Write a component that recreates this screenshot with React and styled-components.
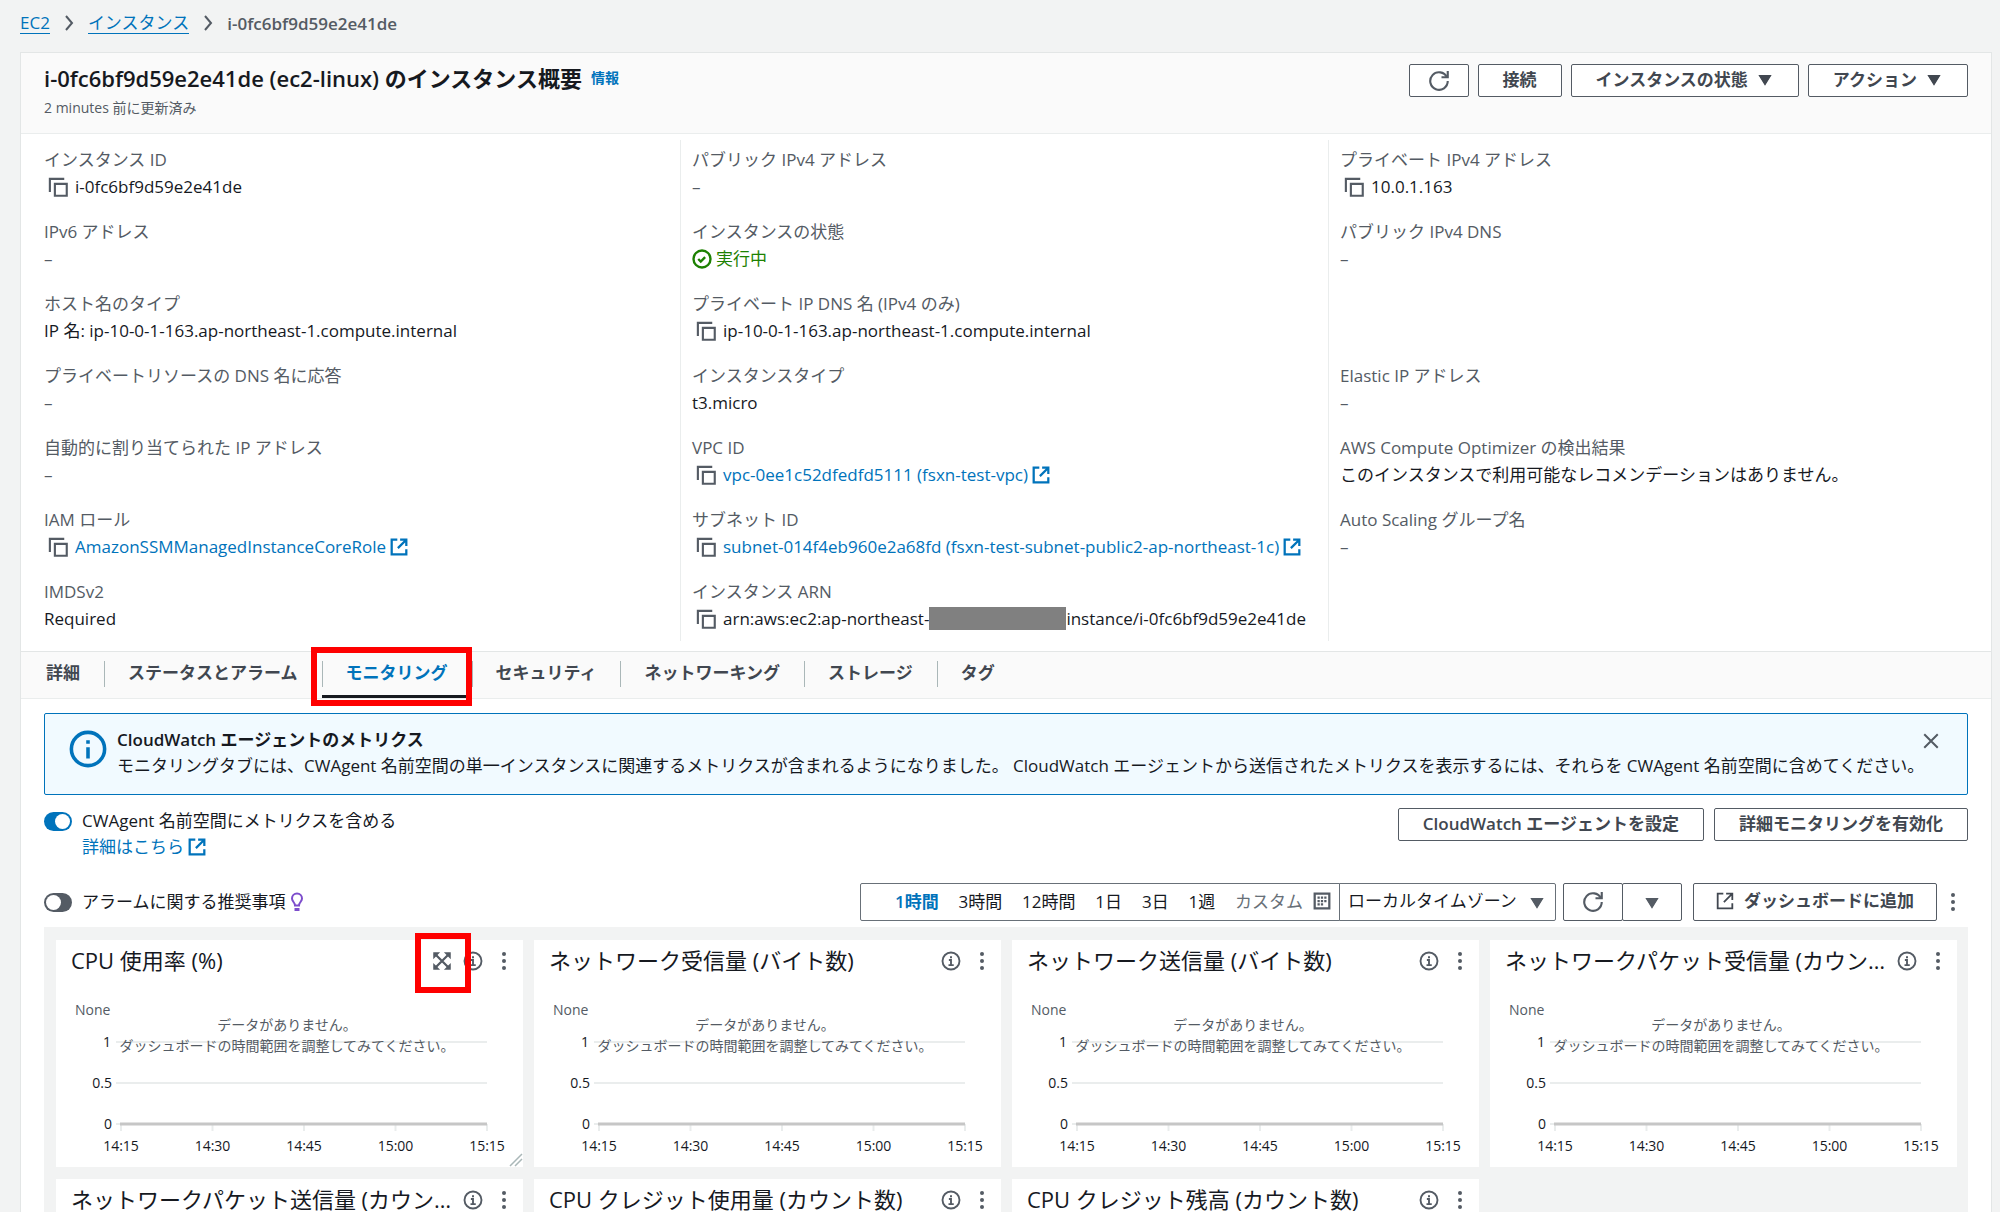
import React from 'react'
import styled, { createGlobalStyle } from 'styled-components'

const GlobalStyle = createGlobalStyle`
    * {
        box-sizing: border-box;
    }

    body {
        margin: 0;
        background: #f2f3f3;
        color: #16191f;
        font-family: 'Open Sans', 'Noto Sans CJK JP', sans-serif;
        font-size: 17px;
        line-height: 27px;
    }

    button, select, input {
        font: inherit;
        color: inherit;
    }

    a {
        color: #0073bb;
        text-decoration: none;
    }
`

const Page = styled.div`
    height: 100vh;
    overflow-y: auto;
    scrollbar-width: none;
`

const Svg = styled.svg`
    display: block;
    flex: none;
    width: ${props => props.$width || props.$size || 18}px;
    height: ${props => props.$size || 18}px;
    fill: none;
    stroke: currentColor;
    stroke-width: ${props => props.$stroke || 2};
`

const Breadcrumbs = styled.nav`
    display: flex;
    align-items: center;
    gap: 11px;
    height: 52px;
    padding: 0 20px 6px;
    color: #545b64;

    a {
        line-height: 21px;
        border-bottom: 1px solid #0073bb;
    }

    span {
        font-weight: 600;
    }
`

const Panel = styled.main`
    margin: 0 8px 0 20px;
    background: #fff;
    border: 1px solid #e3e6e6;
    border-bottom: 0;
`

const Header = styled.header`
    display: flex;
    justify-content: space-between;
    align-items: flex-start;
    height: 81px;
    padding: 11px 23px 0;
    background: #fafafa;
    border-bottom: 1px solid #eaeded;
`

const Title = styled.h1`
    display: flex;
    align-items: center;
    gap: 9px;
    margin: 0;
    font-size: 22px;
    line-height: 28px;
    font-weight: 600;

    a {
        font-size: 14px;
    }
`

const Updated = styled.p`
    margin: 2px 0 0;
    color: #545b64;
    font-size: 14px;
`

const ButtonRow = styled.div`
    display: flex;
    gap: ${props => props.$gap || 9}px;
`

const Button = styled.button`
    display: flex;
    align-items: center;
    justify-content: center;
    gap: ${props => props.$gap || 8}px;
    height: ${props => props.$tall ? 38 : 33}px;
    padding: 0 ${props => props.$pad || 24}px 3px;
    background: #fff;
    border: 1px solid #545b64;
    border-radius: 2px;
    color: #414750;
    font-weight: 600;
    white-space: nowrap;
`

const IconButton = styled(Button)`
    width: 60px;
    padding: 0;
    color: #545b64;
`

const BareButton = styled.button`
    display: flex;
    align-items: center;
    justify-content: center;
    padding: 0;
    border: 0;
    background: none;
    color: #545b64;
`

const Summary = styled.div`
    display: grid;
    grid-template-columns: repeat(3, minmax(0, 1fr));
    padding: 6px 14px 10px 12px;
`

const SummaryColumn = styled.dl`
    display: grid;
    grid-template-rows: repeat(7, 54px);
    gap: 18px;
    margin: 0;
    padding: 6px 10px 9px 11px;
    border-right: 1px solid #eaeded;

    &:last-child {
        border-right: 0;
    }
`

const Label = styled.dt`
    color: #545b64;
`

const Value = styled.dd`
    display: flex;
    align-items: center;
    margin: 0;
    white-space: nowrap;
    color: ${props => props.$muted ? '#545b64' : 'inherit'};
`

const CopyButton = styled(BareButton)`
    margin: 0 7px 0 4px;
`

const ExternalLink = styled.a`
    display: inline-flex;
    align-items: center;
    gap: 4px;
`

const Status = styled.span`
    display: flex;
    align-items: center;
    gap: 4px;
    color: #1d8102;
`

const Redacted = styled.span`
    width: 137px;
    height: 23px;
    background: #808080;
`

const TabBar = styled.nav`
    display: flex;
    height: 48px;
    padding-left: 1px;
    background: #fafafa;
    border-top: 1px solid #e3e6e6;
    border-bottom: 1px solid #eaeded;
`

const Tab = styled.button`
    position: relative;
    display: flex;
    align-items: center;
    padding: 0 24px 3px;
    border: 0;
    border-bottom: 3px solid ${props => props.$active ? '#16191f' : 'transparent'};
    background: linear-gradient(#aab7b8, #aab7b8) 0 9px / 1px 26px no-repeat;
    color: ${props => props.$active ? '#0073bb' : '#414750'};
    font-weight: 600;

    &:first-child {
        background: none;
    }
`

const Highlight = styled.span`
    position: absolute;
    z-index: 2;
    inset: ${props => props.$inset};
    border: 6px solid #fe0000;
    pointer-events: none;
`

const Content = styled.section`
    padding: 14px 23px 0;
`

const Alert = styled.div`
    display: flex;
    align-items: flex-start;
    height: 82px;
    padding: 13px 27px 0 24px;
    background: #f1faff;
    border: 1px solid #0073bb;
    border-radius: 2px;

    & > svg {
        margin-top: 3px;
        color: #0073bb;
    }
`

const AlertText = styled.div`
    flex: 1;
    min-width: 0;
    padding-left: 10px;
    line-height: 26px;
    white-space: nowrap;

    strong, span {
        display: block;
    }

    strong {
        font-weight: 600;
    }
`

const CloseButton = styled(BareButton)`
    margin-top: 5px;
`

const Row = styled.div`
    display: flex;
    justify-content: space-between;
    align-items: flex-start;
    margin-top: ${props => props.$top}px;
`

const ToggleBox = styled.div`
    display: grid;
    grid-template-columns: 28px auto;
    align-items: center;
    column-gap: 10px;
    padding-top: ${props => props.$top || 0}px;
    line-height: 26px;

    label {
        display: flex;
        align-items: center;
        gap: 4px;
    }
`

const ToggleInput = styled.input`
    appearance: none;
    display: flex;
    width: 28px;
    height: 19px;
    margin: 0;
    padding: 2px;
    border-radius: 10px;
    background: #545b64;

    &::before {
        content: '';
        width: 15px;
        height: 15px;
        border-radius: 50%;
        background: #fff;
    }

    &:checked {
        justify-content: flex-end;
        background: #0073bb;
    }
`

const ToggleLink = styled(ExternalLink)`
    grid-column: 2;
`

const Toolbar = styled.div`
    display: flex;
    align-items: center;
`

const RangeBox = styled.div`
    display: flex;
    align-items: center;
    justify-content: space-between;
    width: 480px;
    height: 38px;
    padding: 0 8px 2px 34px;
    border: 1px solid #687078;
    border-radius: 2px 0 0 2px;
`

const RangeButton = styled(BareButton)`
    gap: 10px;
    color: ${props => props.$active ? '#0073bb' : props.$muted ? '#687078' : '#16191f'};
    font-weight: ${props => props.$active ? 600 : 400};
    white-space: nowrap;

    svg {
        color: #545b64;
    }
`

const ZoneBox = styled.label`
    display: grid;
    align-items: center;
    width: 217px;
    height: 38px;
    margin: 0 7px 0 -1px;
    color: #545b64;

    & > * {
        grid-area: 1 / 1;
    }

    svg {
        justify-self: end;
        margin-right: 10px;
        pointer-events: none;
    }
`

const ZoneSelect = styled.select`
    appearance: none;
    width: 100%;
    height: 38px;
    padding: 0 30px 3px 8px;
    border: 1px solid #687078;
    border-radius: 0 2px 2px 0;
    background: #fff;
    color: #16191f;
`

const SplitButtons = styled.div`
    display: flex;
    margin-right: 11px;

    button + button {
        margin-left: -1px;
    }
`

const MoreButton = styled(BareButton)`
    width: 31px;
    height: 38px;
`

const Board = styled.div`
    display: grid;
    grid-template-columns: repeat(4, minmax(0, 1fr));
    gap: 12px 11px;
    margin-top: 6px;
    padding: 13px 11px 13px 12px;
    background: #f2f3f3;
`

const Card = styled.article`
    height: 227px;
    background: #fff;
`

const CardHeader = styled.div`
    display: flex;
    align-items: center;
    height: 42px;
    padding: 0 16px 0 15px;

    h2 {
        flex: 1;
        min-width: 0;
        margin: 0 8px 3px 0;
        overflow: hidden;
        font-size: 22px;
        line-height: 32px;
        font-weight: 400;
        white-space: nowrap;
        text-overflow: ellipsis;
    }
`

const CardTools = styled.div`
    display: flex;
    align-items: center;
    gap: 18px;
    color: #545b64;
`

const ExpandButton = styled(BareButton)`
    position: relative;
    margin-right: -7px;
`

const ChartSvg = styled.svg`
    display: block;
    width: 100%;
    font-size: 14px;
    fill: #16191f;
`

const Icon = ({ size, stroke, children }) => (
    <Svg viewBox="0 0 16 16" $size={size} $stroke={stroke} aria-hidden="true">{children}</Svg>
)

const CopyIcon = () => (
    <Icon size={20} stroke={1.7}>
        <path d="M15 5.500H5.500V15H15z" />
        <path d="M13 1.500H1.500V12" />
    </Icon>
)

const ExternalIcon = ({ stroke = 2 }) => (
    <Icon size={18} stroke={stroke}>
        <path d="M6.500 1.500h-5v13h13V10" />
        <path d="M9 1.500h5.500V7M14.500 1.500L7 9" />
    </Icon>
)

const RefreshIcon = () => (
    <Icon size={20} stroke={1.7}>
        <path d="M10 5h5V0" />
        <path d="M15 8a7 7 0 1 1-.7-3" />
    </Icon>
)

const Chevron = () => (
    <Icon size={16} stroke={2}>
        <path d="M5 1l6 7-6 7" />
    </Icon>
)

const Caret = () => (
    <Icon size={18}>
        <path d="M3 5h10L8 13z" fill="currentColor" strokeWidth="1" />
    </Icon>
)

const CheckIcon = () => (
    <Icon size={20} stroke={1.9}>
        <circle cx="8" cy="8" r="6.800" />
        <path d="M5 8l2 2 3.500-3.500" />
    </Icon>
)

const InfoIcon = () => (
    <Icon size={20} stroke={1.5}>
        <circle cx="8" cy="8" r="6.800" />
        <path d="M6.300 7.200H8v4M6 11.300h4.200M7.200 5h1.600" />
    </Icon>
)

const BigInfoIcon = () => (
    <Icon size={38} stroke={1.5}>
        <circle cx="8" cy="8" r="7" />
        <path d="M8 12V7.300M8 5.800V4.300" />
    </Icon>
)

const Dots = () => (
    <Svg viewBox="0 0 6 20" $width={6} $size={20} aria-hidden="true">
        {[3, 10, 17].map(y => <circle key={y} cx="3" cy={y} r="2" fill="currentColor" stroke="none" />)}
    </Svg>
)

const CalendarIcon = () => (
    <Icon size={18} stroke={2}>
        <path d="M1.500 1.500h13v13h-13z" />
        <path d="M4 5h2M7 5h2M10 5h2M4 8h2M7 8h2M10 8h2M4 11h2M7 11h2" />
    </Icon>
)

const BulbIcon = () => (
    <Svg viewBox="0 0 14 20" $width={14} $size={20} aria-hidden="true" color="#7d4dcc">
        <path d="M5 13.500C5 10.500 2 9.500 2 6.500a5 5 0 0 1 10 0c0 3-3 4-3 7z" />
        <path d="M4.500 17.500h5" strokeWidth="3" />
    </Svg>
)

const ExpandIcon = () => (
    <Icon size={20} stroke={1.8}>
        <path d="M1 1h5.500L1 6.500zM15 1H9.500L15 6.500zM1 15h5.500L1 9.500zM15 15H9.500L15 9.500z" fill="currentColor" stroke="none" />
        <path d="M2 2l12 12M14 2L2 14" />
    </Icon>
)

const copied = (text) => ({ copy: true, text })

const columns = [
    [
        ['インスタンス ID', copied('i-0fc6bf9d59e2e41de')],
        ['IPv6 アドレス'],
        ['ホスト名のタイプ', { text: 'IP 名: ip-10-0-1-163.ap-northeast-1.compute.internal' }],
        ['プライベートリソースの DNS 名に応答'],
        ['自動的に割り当てられた IP アドレス'],
        ['IAM ロール', { copy: true, link: 'AmazonSSMManagedInstanceCoreRole' }],
        ['IMDSv2', { text: 'Required' }],
    ],
    [
        ['パブリック IPv4 アドレス'],
        ['インスタンスの状態', { status: '実行中' }],
        ['プライベート IP DNS 名 (IPv4 のみ)', copied('ip-10-0-1-163.ap-northeast-1.compute.internal')],
        ['インスタンスタイプ', { text: 't3.micro' }],
        ['VPC ID', { copy: true, link: 'vpc-0ee1c52dfedfd5111 (fsxn-test-vpc)' }],
        ['サブネット ID', { copy: true, link: 'subnet-014f4eb960e2a68fd (fsxn-test-subnet-public2-ap-northeast-1c)' }],
        ['インスタンス ARN', { copy: true, text: 'arn:aws:ec2:ap-northeast-', rest: 'instance/i-0fc6bf9d59e2e41de' }],
    ],
    [
        ['プライベート IPv4 アドレス', copied('10.0.1.163')],
        ['パブリック IPv4 DNS'],
        null,
        ['Elastic IP アドレス'],
        ['AWS Compute Optimizer の検出結果', { text: 'このインスタンスで利用可能なレコメンデーションはありません。' }],
        ['Auto Scaling グループ名'],
    ],
]

const tabs = ['詳細', 'ステータスとアラーム', 'モニタリング', 'セキュリティ', 'ネットワーキング', 'ストレージ', 'タグ']

const ranges = ['1時間', '3時間', '12時間', '1日', '3日', '1週']

const metrics = [
    'CPU 使用率 (%)',
    'ネットワーク受信量 (バイト数)',
    'ネットワーク送信量 (バイト数)',
    'ネットワークパケット受信量 (カウント数)',
    'ネットワークパケット送信量 (カウント数)',
    'CPU クレジット使用量 (カウント数)',
    'CPU クレジット残高 (カウント数)',
]

const times = ['14:15', '14:30', '14:45', '15:00', '15:15']

function Field({ item }) {
    if (!item) return <div />
    const [label, value] = item

    return (
        <div>
            <Label>{label}</Label>
            {
                value ? (
                    <Value>
                        {value.copy && <CopyButton aria-label="コピー"><CopyIcon /></CopyButton>}
                        {value.text}
                        {value.rest && <><Redacted />{value.rest}</>}
                        {value.link && <ExternalLink href="#">{value.link}<ExternalIcon /></ExternalLink>}
                        {value.status && <Status><CheckIcon />{value.status}</Status>}
                    </Value>
                ) : <Value $muted>–</Value>
            }
        </div>
    )
}

function Chart({ resizable }) {
    return (
        <ChartSvg viewBox="0 0 467 185">
            <g stroke="#eaeded" strokeWidth="2">
                <path d="M60 60H431M60 101H431M60 142H65" />
                {times.map((time, i) => <path key={time} d={`M${65 + i * 91.5} 142v7`} />)}
            </g>
            <path d="M64 142H431" stroke="#c6c6c6" strokeWidth="3" />
            <text x="19" y="33" fill="#545b64">None</text>
            <g textAnchor="end">
                <text x="55" y="65">1</text>
                <text x="56" y="106">0.5</text>
                <text x="56" y="147">0</text>
            </g>
            <g textAnchor="middle">
                {times.map((time, i) => <text key={time} x={65 + i * 91.5} y="169">{time}</text>)}
                <g fill="#545b64">
                    <text x="231" y="48">データがありません。</text>
                    <text x="231" y="69">ダッシュボードの時間範囲を調整してみてください。</text>
                </g>
            </g>
            {resizable && <path d="M454 184l12-12M459 184l7-7" stroke="#aab7b8" strokeWidth="1.500" />}
        </ChartSvg>
    )
}

function MetricCard({ title, expanded }) {
    return (
        <Card>
            <CardHeader>
                <h2>{title}</h2>
                <CardTools>
                    {
                        expanded && (
                            <ExpandButton aria-label="拡大">
                                <ExpandIcon />
                                <Highlight $inset="-18px -19px -22px -17px" />
                            </ExpandButton>
                        )
                    }
                    <BareButton aria-label="情報"><InfoIcon /></BareButton>
                    <BareButton aria-label="メニュー"><Dots /></BareButton>
                </CardTools>
            </CardHeader>
            <Chart resizable={expanded} />
        </Card>
    )
}

export default function App() {
    const [range, setRange] = React.useState('1時間')

    return (
        <Page>
            <GlobalStyle />
            <Breadcrumbs>
                <a href="#">EC2</a>
                <Chevron />
                <a href="#">インスタンス</a>
                <Chevron />
                <span>i-0fc6bf9d59e2e41de</span>
            </Breadcrumbs>
            <Panel>
                <Header>
                    <div>
                        <Title>
                            i-0fc6bf9d59e2e41de (ec2-linux) のインスタンス概要
                            <a href="#">情報</a>
                        </Title>
                        <Updated>2 minutes 前に更新済み</Updated>
                    </div>
                    <ButtonRow>
                        <IconButton aria-label="更新"><RefreshIcon /></IconButton>
                        <Button>接続</Button>
                        <Button>インスタンスの状態<Caret /></Button>
                        <Button>アクション<Caret /></Button>
                    </ButtonRow>
                </Header>
                <Summary>
                    {columns.map((column, i) => (
                        <SummaryColumn key={i}>
                            {column.map((item, j) => <Field key={j} item={item} />)}
                        </SummaryColumn>
                    ))}
                </Summary>
                <TabBar>
                    {tabs.map(tab => (
                        <Tab key={tab} $active={tab === 'モニタリング'}>
                            {tab}
                            {tab === 'モニタリング' && <Highlight $inset="-5px 0 -11px -11px" />}
                        </Tab>
                    ))}
                </TabBar>
                <Content>
                    <Alert>
                        <BigInfoIcon />
                        <AlertText>
                            <strong>CloudWatch エージェントのメトリクス</strong>
                            <span>モニタリングタブには、CWAgent 名前空間の単一インスタンスに関連するメトリクスが含まれるようになりました。 CloudWatch エージェントから送信されたメトリクスを表示するには、それらを CWAgent 名前空間に含めてください。</span>
                        </AlertText>
                        <CloseButton aria-label="閉じる">
                            <Icon size={18} stroke={1.8}><path d="M2 2l12 12M14 2L2 14" /></Icon>
                        </CloseButton>
                    </Alert>
                    <Row $top={13}>
                        <ToggleBox>
                            <ToggleInput type="checkbox" id="cwagent" defaultChecked />
                            <label htmlFor="cwagent">CWAgent 名前空間にメトリクスを含める</label>
                            <ToggleLink href="#">詳細はこちら<ExternalIcon /></ToggleLink>
                        </ToggleBox>
                        <ButtonRow $gap={10}>
                            <Button>CloudWatch エージェントを設定</Button>
                            <Button>詳細モニタリングを有効化</Button>
                        </ButtonRow>
                    </Row>
                    <Row $top={23}>
                        <ToggleBox $top={6}>
                            <ToggleInput type="checkbox" id="alarms" />
                            <label htmlFor="alarms">アラームに関する推奨事項<BulbIcon /></label>
                        </ToggleBox>
                        <Toolbar>
                            <RangeBox>
                                {ranges.map(item => (
                                    <RangeButton key={item} $active={item === range} onClick={() => setRange(item)}>{item}</RangeButton>
                                ))}
                                <RangeButton $muted>カスタム<CalendarIcon /></RangeButton>
                            </RangeBox>
                            <ZoneBox>
                                <ZoneSelect aria-label="タイムゾーン">
                                    <option>ローカルタイムゾーン</option>
                                </ZoneSelect>
                                <Caret />
                            </ZoneBox>
                            <SplitButtons>
                                <IconButton $tall aria-label="更新"><RefreshIcon /></IconButton>
                                <IconButton $tall aria-label="更新間隔"><Caret /></IconButton>
                            </SplitButtons>
                            <Button $tall $pad={22} $gap={10}><ExternalIcon stroke={1.6} />ダッシュボードに追加</Button>
                            <MoreButton aria-label="メニュー"><Dots /></MoreButton>
                        </Toolbar>
                    </Row>
                    <Board>
                        {metrics.map((title, i) => <MetricCard key={title} title={title} expanded={i === 0} />)}
                    </Board>
                </Content>
            </Panel>
        </Page>
    )
}
